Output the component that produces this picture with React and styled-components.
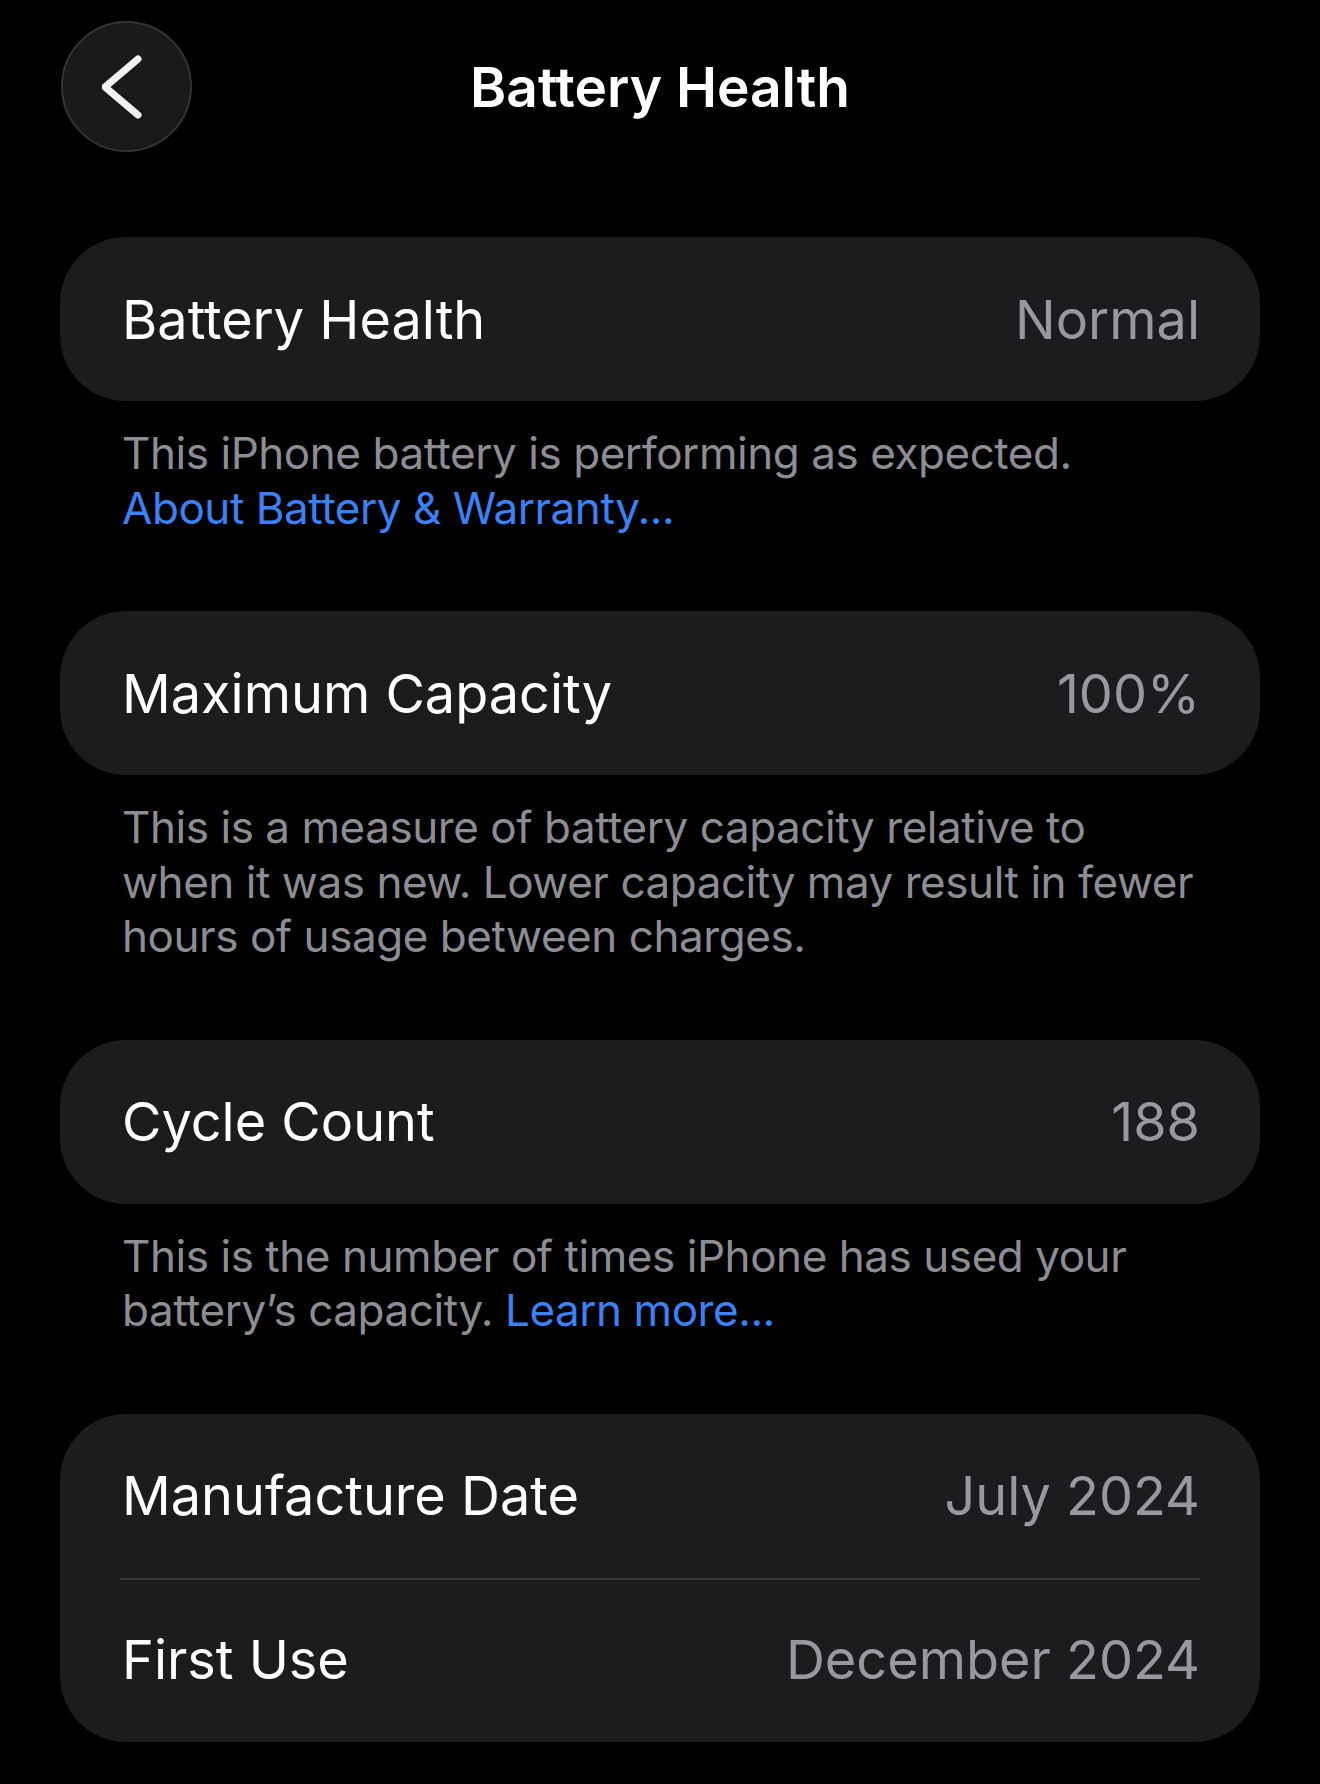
import React from 'react';
import styled, { createGlobalStyle } from 'styled-components';

const COLORS = {
  background: '#000000',
  card: '#1c1c1e',
  label: '#ffffff',
  secondary: '#98989f',
  footnote: '#8d8d93',
  link: '#3b82f6',
  separator: '#38383a',
};

const GlobalStyle = createGlobalStyle`
  html, body {
    margin: 0;
    padding: 0;
    background: ${COLORS.background};
  }
  body {
    font-family: Inter, "Noto Sans", "Liberation Sans", sans-serif;
    -webkit-font-smoothing: antialiased;
  }
`;

const Page = styled.div`
  width: 1320px;
  min-height: 1784px;
  box-sizing: border-box;
  padding: 21px 60px 0;
  background: ${COLORS.background};
  color: ${COLORS.label};
`;

const NavBar = styled.header`
  position: relative;
  display: flex;
  align-items: center;
  justify-content: center;
  height: 131px;
  margin-bottom: 85px;
`;

const BackButton = styled.button`
  position: absolute;
  left: 1px;
  top: 0;
  width: 131px;
  height: 131px;
  border-radius: 50%;
  border: 2px solid #333335;
  background: #1a1a1a;
  display: flex;
  align-items: center;
  justify-content: center;
  padding: 0;
  cursor: pointer;
`;

const Title = styled.h1`
  margin: 0;
  font-size: 55px;
  font-weight: 600;
  color: ${COLORS.label};
`;

const Card = styled.section`
  background: ${COLORS.card};
  border-radius: 66px;
  overflow: hidden;
`;

const Row = styled.div`
  display: flex;
  align-items: center;
  justify-content: space-between;
  height: 164px;
  padding: 0 60px 0 62px;
  position: relative;

  & + &::before {
    content: '';
    position: absolute;
    top: 0;
    left: 60px;
    right: 60px;
    height: 2px;
    background: ${COLORS.separator};
  }
`;

const Label = styled.span`
  font-size: 54px;
  font-weight: 400;
  color: ${COLORS.label};
`;

const Value = styled.span`
  font-size: 54px;
  font-weight: 400;
  color: ${COLORS.secondary};
`;

const Footer = styled.p`
  margin: 0;
  padding: 25px 56px 76px 62px;
  font-size: 44px;
  line-height: 54.5px;
  letter-spacing: -0.45px;
  color: ${COLORS.footnote};
`;

const Link = styled.a`
  color: ${COLORS.link};
  text-decoration: none;
`;

const ChevronLeft = () => (
  <svg width="50" height="70" viewBox="0 0 50 70" fill="none">
    <path
      d="M36 7 L3 35 L36 63"
      stroke="#f2f2f2"
      strokeWidth="7"
      strokeLinecap="round"
      strokeLinejoin="round"
    />
  </svg>
);

const sections = [
  {
    rows: [{ label: 'Battery Health', value: 'Normal' }],
    footer: (
      <>
        This iPhone battery is performing as expected.
        <br />
        <Link href="#">About Battery &amp; Warranty...</Link>
      </>
    ),
  },
  {
    rows: [{ label: 'Maximum Capacity', value: '100%' }],
    footer: (
      <>
        This is a measure of battery capacity relative to when it was new. Lower
        capacity may result in fewer hours of usage between charges.
      </>
    ),
  },
  {
    rows: [{ label: 'Cycle Count', value: '188' }],
    footer: (
      <>
        This is the number of times iPhone has used your battery’s capacity.{' '}
        <Link href="#">Learn more...</Link>
      </>
    ),
  },
  {
    rows: [
      { label: 'Manufacture Date', value: 'July 2024' },
      { label: 'First Use', value: 'December 2024' },
    ],
  },
];

const App = () => (
  <Page>
    <GlobalStyle />
    <NavBar>
      <BackButton aria-label="Back">
        <ChevronLeft />
      </BackButton>
      <Title>Battery Health</Title>
    </NavBar>

    {sections.map((section, i) => (
      <React.Fragment key={i}>
        <Card>
          {section.rows.map((row) => (
            <Row key={row.label}>
              <Label>{row.label}</Label>
              <Value>{row.value}</Value>
            </Row>
          ))}
        </Card>
        {section.footer && <Footer>{section.footer}</Footer>}
      </React.Fragment>
    ))}
  </Page>
);

export default App;
